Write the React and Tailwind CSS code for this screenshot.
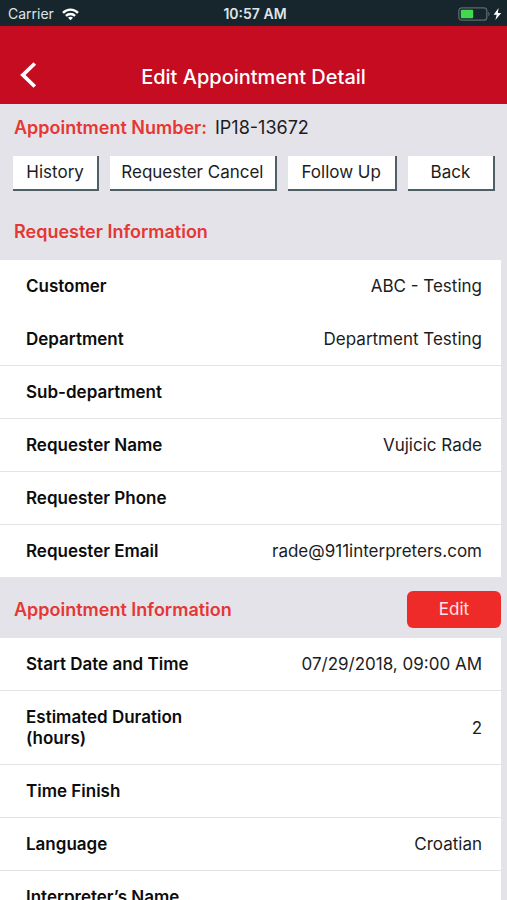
import React from 'react';
import clsx from 'clsx';

const requesterRows = [
  { label: 'Customer', value: 'ABC - Testing', plain: true },
  { label: 'Department', value: 'Department Testing' },
  { label: 'Sub-department', value: '' },
  { label: 'Requester Name', value: 'Vujicic Rade' },
  { label: 'Requester Phone', value: '' },
  { label: 'Requester Email', value: 'rade@911interpreters.com' },
];

const appointmentRows = [
  { label: 'Start Date and Time', value: '07/29/2018, 09:00 AM' },
  { label: 'Estimated Duration (hours)', value: '2' },
  { label: 'Time Finish', value: '' },
  { label: 'Language', value: 'Croatian' },
  { label: 'Interpreter’s Name', value: '' },
];

function StatusBar() {
  return (
    <div className="grid h-[26px] shrink-0 grid-cols-[1fr_auto_1fr] items-center bg-[#17252c] pt-[2px] pr-[5px] pl-2 text-sm text-[#dfe5e8]">
      <div className="flex items-center gap-2">
        <span>Carrier</span>
        <svg width="17" height="13" viewBox="0 0 17 13" fill="none" stroke="#fff" strokeWidth="2.4">
          <path d="M1 4.8C5.2 0.6 11.8 0.6 16 4.8" />
          <path d="M3.9 7.9C6.5 5.4 10.5 5.4 13.1 7.9" />
          <path d="M8.5 12.2L6 9.7C7.4 8.5 9.6 8.5 11 9.7Z" fill="#fff" stroke="none" />
        </svg>
      </div>
      <span className="text-center font-semibold">10:57 AM</span>
      <div className="flex items-center justify-end">
        <svg width="44" height="14" viewBox="0 0 44 14">
          <rect x="0.8" y="0.8" width="28" height="12.4" rx="3" fill="none" stroke="#5d686d" strokeWidth="1.3" />
          <rect x="2.8" y="2.8" width="12.4" height="8.4" rx="1" fill="#42d94f" />
          <path d="M30.3 4.8C32 5.4 32 8.6 30.3 9.2Z" fill="#5d686d" />
          <path d="M40.6 1L35.6 7.7H38.7L37.4 13L43.2 6.1H39.8Z" fill="#fff" />
        </svg>
      </div>
    </div>
  );
}

function ActionButton({ children }) {
  return (
    <button
      type="button"
      className="h-[35px] border-r-2 border-b-2 border-[#4f5f66] bg-white text-center text-[17px] leading-[21px] whitespace-nowrap text-[#1c1c1e]"
    >
      {children}
    </button>
  );
}

function DetailList({ rows }) {
  return (
    <dl className="mr-[6px] bg-white">
      {rows.map((row) => (
        <div
          key={row.label}
          className={clsx(
            'flex items-center justify-between border-b pt-4 pr-[19px] pb-[15px] pl-[26px] text-[17px] leading-[21px] last:border-b-0',
            row.plain ? 'border-transparent' : 'border-[#e3e3e6]'
          )}
        >
          <dt className="w-2/5 font-semibold text-[#0c0c0c]">{row.label}</dt>
          <dd className="text-right text-[#1c1c1e]">{row.value}</dd>
        </div>
      ))}
    </dl>
  );
}

export default function App() {
  return (
    <div className="flex h-screen flex-col bg-[#e4e3e9] font-[Inter,sans-serif]">
      <StatusBar />

      <header className="grid h-[78px] shrink-0 grid-cols-[40px_1fr_40px] items-end bg-[#c50c20] px-2 pb-[15px] text-white">
        <button type="button" aria-label="Go back" className="flex h-7 items-center pl-3">
          <svg width="17" height="26" viewBox="0 0 17 26" fill="none" stroke="currentColor" strokeWidth="3.8">
            <path d="M14.8 1.5L2.9 13L14.8 24.5" />
          </svg>
        </button>
        <h1 className="text-center text-xl leading-6 font-medium">Edit Appointment Detail</h1>
      </header>

      <main className="flex-1 overflow-y-auto [scrollbar-width:none]">
        <p className="flex gap-2 px-[14px] pt-[13px] text-lg leading-[22px]">
          <span className="font-semibold text-[#e53734]">Appointment Number:</span>
          <span className="text-[#1c1c1e]">IP18-13672</span>
        </p>

        <div className="mt-[17px] grid grid-cols-[86fr_166fr_109fr_87fr] gap-[11px] pr-3 pl-[13px]">
          <ActionButton>History</ActionButton>
          <ActionButton>Requester Cancel</ActionButton>
          <ActionButton>Follow Up</ActionButton>
          <ActionButton>Back</ActionButton>
        </div>

        <section>
          <h2 className="px-[14px] pt-[30px] pb-[17px] text-lg leading-[22px] font-semibold text-[#e53734]">
            Requester Information
          </h2>
          <DetailList rows={requesterRows} />
        </section>

        <section>
          <div className="flex items-center justify-between pt-[14px] pr-[6px] pb-[10px] pl-[14px]">
            <h2 className="text-lg leading-[22px] font-semibold text-[#e53734]">Appointment Information</h2>
            <button type="button" className="h-[37px] w-[94px] rounded-md bg-[#ef2b2a] text-[17px] text-[#ffe4e2]">
              Edit
            </button>
          </div>
          <DetailList rows={appointmentRows} />
        </section>
      </main>
    </div>
  );
}
